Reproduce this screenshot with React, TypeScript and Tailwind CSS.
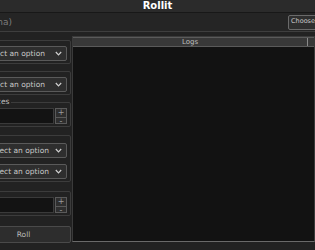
import React from "react";

function Chevron() {
  return (
    <svg width="7" height="5" viewBox="0 0 7 5" className="shrink-0">
      <path d="M0.8 1 L3.5 3.8 L6.2 1" fill="none" stroke="#d0d0d0" strokeWidth="1.2" />
    </svg>
  );
}

function Select() {
  return (
    <div className="h-[15px] bg-[#2e2e2e] border border-[#5a5a5a] rounded-[2px] flex items-center justify-between pl-[3px] pr-[4px] text-[#c8c8c8] whitespace-nowrap overflow-hidden">
      <span className="leading-none">Select an option</span>
      <Chevron />
    </div>
  );
}

function NumInput() {
  return (
    <div className="h-[16px] flex items-stretch gap-[1px]">
      <div className="flex-1 bg-[#131313] border border-[#3a3a3a]" />
      <div className="w-[12px] flex flex-col border border-[#5a5a5a] bg-[#2e2e2e]">
        <div className="flex-1 flex items-center justify-center text-[#9a9a9a] text-[8px] leading-none border-b border-[#5a5a5a]">+</div>
        <div className="flex-1 flex items-center justify-center text-[#9a9a9a] text-[8px] leading-none">-</div>
      </div>
    </div>
  );
}

function Group({
  label,
  children,
  className,
  labelClass,
}: {
  label: string;
  children: React.ReactNode;
  className?: string;
  labelClass?: string;
}) {
  return (
    <div className={"relative border border-[#3c3c3c] rounded-[2px] pr-[3px] pb-[2px] flex flex-col gap-[6px] " + (className ?? "")}>
      <span className={"absolute -top-[5px] bg-[#222] px-[1px] text-[#bdbdbd] leading-none whitespace-nowrap " + (labelClass ?? "left-[4px]")}>
        {label}
      </span>
      {children}
    </div>
  );
}

export default function App() {
  return (
    <div className="w-[315px] h-[250px] bg-[#222222] overflow-hidden flex flex-col text-[7.5px] font-['DejaVu_Sans',sans-serif]">
      <div className="h-[13px] shrink-0 bg-[#2b2b2b] border-b border-[#181818] flex items-center justify-center">
        <span className="font-bold text-white leading-none text-[10px]">Rollit</span>
      </div>
      <div className="h-[18px] shrink-0 bg-[#252525] flex items-center justify-between">
        <span className="-ml-[20px] text-[#7c7c7c] leading-none text-[9px] whitespace-nowrap">(alpha)</span>
        <div className="h-[15px] w-[60px] shrink-0 -mr-[33px] pl-[2px] border border-[#6a6a6a] bg-[#2f2f2f] rounded-[2px] flex items-center text-[#c8c8c8] whitespace-nowrap text-[6.5px]">
          Choose File
        </div>
      </div>
      <div className="h-[1px] shrink-0 bg-[#3e3e3e]" />
      <div className="flex-1 min-h-0 flex gap-[1px] pt-[4px]">
        <div className="w-[95px] -ml-[24px] shrink-0 flex flex-col">
          <Group label="Dice" className="mt-[4px] pt-[5px] pl-[3px]">
            <Select />
          </Group>
          <Group label="Type" className="mt-[7px] pt-[5px] pl-[3px]">
            <Select />
          </Group>
          <Group label="Dices" className="mt-[7px] pt-[5px] pl-[3px]" labelClass="left-[11px]">
            <NumInput />
          </Group>
          <Group label="Rule" className="mt-[8px] pt-[7px] pl-[7px]">
            <Select />
            <Select />
          </Group>
          <Group label="Mod" className="mt-[9px] pt-[5px] pl-[3px]">
            <NumInput />
          </Group>
          <button className="mt-[10px] h-[17px] shrink-0 bg-[#2d2d2d] border border-[#4a4a4a] rounded-[2px] text-[#b8b8b8] flex items-center justify-center">
            Roll
          </button>
        </div>
        <div className="flex-1 flex flex-col border border-[#3a3a3a] border-b-[#6a6a6a] mb-[8px]">
          <div className="h-[10px] shrink-0 flex bg-[#383838] border-t border-t-[#5a5a5a] border-b border-b-[#5a5a5a]">
            <div className="flex-1 flex items-center justify-center text-[#bdbdbd] leading-none text-[7px] border-r border-[#8a8a8a]">
              Logs
            </div>
            <div className="w-[6px]" />
          </div>
          <div className="flex-1 bg-[#121212]" />
        </div>
      </div>
    </div>
  );
}
